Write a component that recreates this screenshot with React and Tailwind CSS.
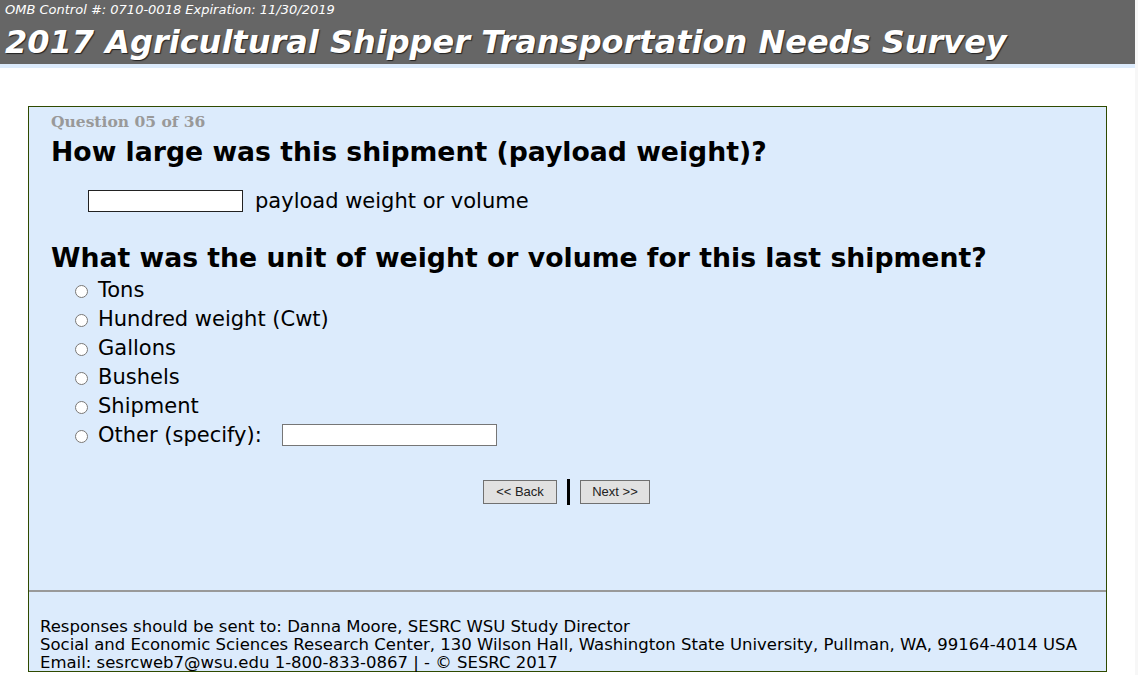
import React, { useState } from 'react';

const units = ['Tons', 'Hundred weight (Cwt)', 'Gallons', 'Bushels', 'Shipment'];

function App() {
  const [unit, setUnit] = useState('');
  const [weight, setWeight] = useState('');
  const [other, setOther] = useState('');

  return (
    <div className="flex min-h-[675px] bg-white font-['DejaVu_Sans',Verdana,sans-serif] text-black">
      <div className="w-[1135px]">
        <div className="h-[64px] bg-[#666666] px-[5px] pt-[2px] text-white">
          <div className="text-[13px] italic leading-[16px]">OMB Control #: 0710-0018 Expiration: 11/30/2019</div>
          <h1 className="mt-[4px] text-[32px] font-bold italic leading-[40px] [text-shadow:1px_1px_1px_#222]">
            2017 Agricultural Shipper Transportation Needs Survey
          </h1>
        </div>
        <div className="h-[4px] bg-[#dcebfc]" />

        <div className="ml-[28px] mt-[38px] flex h-[566px] w-[1079px] flex-col border border-[#2f4a00] bg-[#dcebfc]">
          <div className="flex-1 pl-[22px] pt-[5px]">
            <div className="font-['DejaVu_Serif',Georgia,serif] text-[15.5px] font-bold leading-[20px] text-[#999999]">
              Question 05 of 36
            </div>
            <h2 className="mt-[3px] text-[26.7px] font-bold leading-[34px]">How large was this shipment (payload weight)?</h2>
            <div className="mt-[20px] flex items-center pl-[37px]">
              <input
                value={weight}
                onChange={(e) => setWeight(e.target.value)}
                className="h-[22px] w-[155px] border border-[#222] bg-white px-1 outline-none"
              />
              <span className="ml-[12px] text-[21px] leading-[24px]">payload weight or volume</span>
            </div>
            <h2 className="mt-[28px] text-[26.7px] font-bold leading-[34px]">
              What was the unit of weight or volume for this last shipment?
            </h2>
            <div className="mt-0 pl-[24px]">
              {units.map((u) => (
                <label key={u} className="flex h-[29px] items-center">
                  <input
                    type="radio"
                    name="unit"
                    checked={unit === u}
                    onChange={() => setUnit(u)}
                    className="m-0 mt-[4px] h-[13px] w-[13px] accent-[#666]"
                  />
                  <span className="ml-[10px] text-[21px] leading-[24px]">{u}</span>
                </label>
              ))}
              <label className="flex h-[29px] items-center">
                <input
                  type="radio"
                  name="unit"
                  checked={unit === 'other'}
                  onChange={() => setUnit('other')}
                  className="m-0 mt-[4px] h-[13px] w-[13px] accent-[#666]"
                />
                <span className="ml-[10px] text-[21px] leading-[24px]">Other (specify):</span>
                <input
                  value={other}
                  onChange={(e) => setOther(e.target.value)}
                  className="ml-[20px] h-[22px] w-[215px] border border-[#767676] bg-white px-1 outline-none"
                />
              </label>
            </div>
            <div className="mt-[30px] flex items-center justify-center pr-[24px] font-['Liberation_Sans',Arial,sans-serif] text-[13px]">
              <button className="h-[24px] w-[74px] border border-[#707070] bg-[#e1e1e1] text-[#222]">&lt;&lt; Back</button>
              <span className="mx-[10px] h-[26px] w-[3px] bg-black" />
              <button className="h-[24px] w-[70px] border border-[#707070] bg-[#e1e1e1] text-[#222]">Next &gt;&gt;</button>
            </div>
          </div>
          <div className="h-[81px] border-t-2 border-[#999999] pl-[11px] pt-[26px] text-[16.5px] leading-[18px]">
            <div>Responses should be sent to: Danna Moore, SESRC WSU Study Director</div>
            <div>Social and Economic Sciences Research Center, 130 Wilson Hall, Washington State University, Pullman, WA, 99164-4014 USA</div>
            <div>Email: sesrcweb7@wsu.edu 1-800-833-0867 | - © SESRC 2017</div>
          </div>
        </div>
      </div>
      <div className="w-[3px] bg-[#f7f7f7]" />
    </div>
  );
}

export default App;
